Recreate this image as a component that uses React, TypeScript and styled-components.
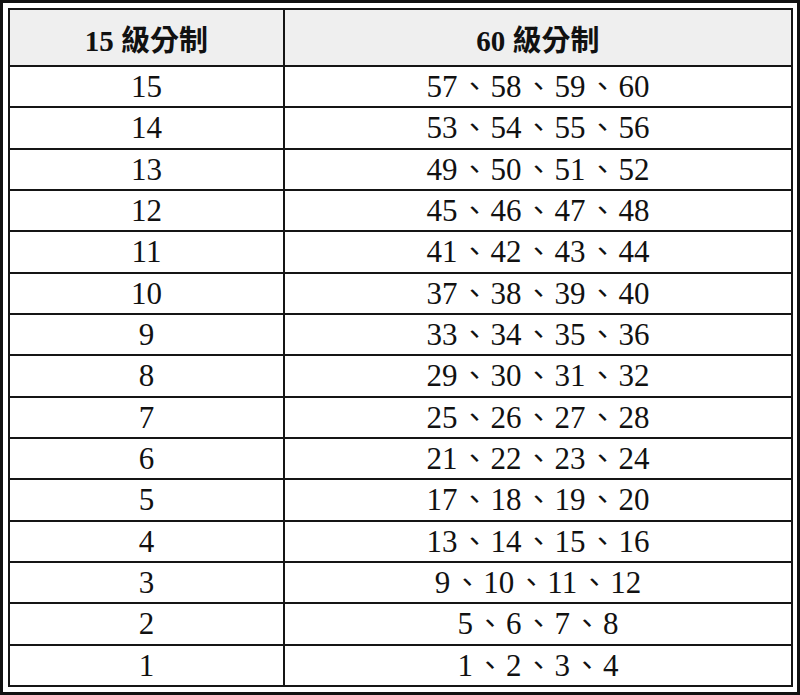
import styled, { createGlobalStyle } from 'styled-components';

const GlobalStyle = createGlobalStyle`
  html, body {
    margin: 0;
    padding: 0;
    background: #ffffff;
  }
`;

const Frame = styled.div`
  box-sizing: border-box;
  width: 800px;
  height: 695px;
  border: 3px solid #111;
  padding: 5px 4px 5px 5px;
  background: #fff;
`;

const Table = styled.table`
  width: 100%;
  height: 100%;
  border-collapse: collapse;
  table-layout: fixed;
  border: 2px solid #151515;
  font-family: "Liberation Serif", "Noto Sans CJK TC", serif;
  color: #111;
`;

const HeadCell = styled.th`
  height: 55px;
  padding: 0;
  background: #efefef;
  border: 2px solid #151515;
  font-size: 29px;
  font-weight: 700;
  text-align: center;
  vertical-align: middle;
`;

const Cell = styled.td`
  height: 38px;
  padding: 0;
  border: 2px solid #151515;
  font-size: 31px;
  text-align: center;
  vertical-align: middle;
  line-height: 1;
`;

const Comma = styled.span`
  font-family: "Noto Sans CJK TC", sans-serif;
  font-size: 28px;
  margin: 0 2px 0 3px;
`;

const rows = Array.from({ length: 15 }, (_, i) => 15 - i);

function Levels({ n }: { n: number }) {
  const nums = [4 * n - 3, 4 * n - 2, 4 * n - 1, 4 * n];
  return (
    <>
      {nums.map((v, i) => (
        <span key={v}>
          {i > 0 && <Comma>、</Comma>}
          {v}
        </span>
      ))}
    </>
  );
}

export default function App() {
  return (
    <>
      <GlobalStyle />
      <Frame>
        <Table>
          <colgroup>
            <col style={{ width: '275px' }} />
            <col />
          </colgroup>
          <thead>
            <tr>
              <HeadCell>15 級分制</HeadCell>
              <HeadCell>60 級分制</HeadCell>
            </tr>
          </thead>
          <tbody>
            {rows.map((n) => (
              <tr key={n}>
                <Cell>{n}</Cell>
                <Cell>
                  <Levels n={n} />
                </Cell>
              </tr>
            ))}
          </tbody>
        </Table>
      </Frame>
    </>
  );
}
